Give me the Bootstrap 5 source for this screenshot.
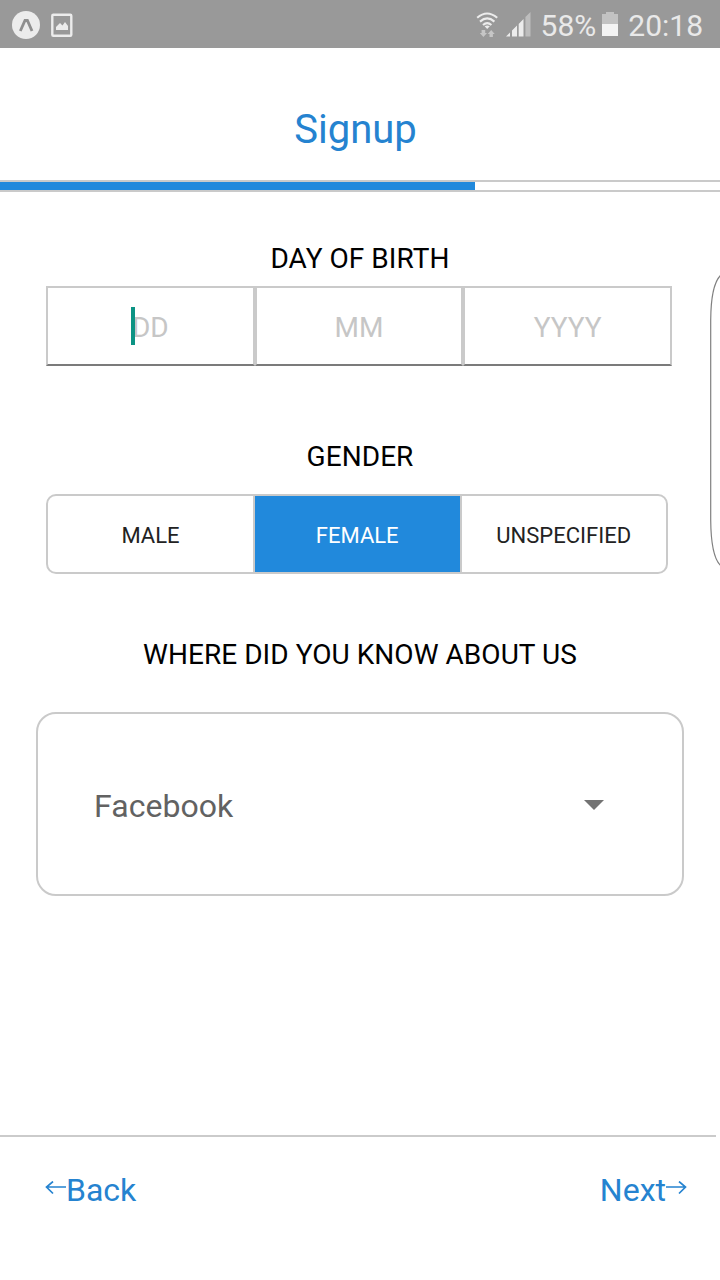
<!DOCTYPE html>
<html lang="en">
<head>
<meta charset="utf-8">
<meta name="viewport" content="width=device-width, initial-scale=1">
<title>Signup</title>
<link href="https://cdn.jsdelivr.net/npm/bootstrap@5.3.0/dist/css/bootstrap.min.css" rel="stylesheet">
<style>
:root { --line: #cacaca; --brand: #2189dc; }
body { font-family: Roboto, "Liberation Sans", sans-serif; background: #fff; color: #000; line-height: 1; }
.screen { width: 720px; height: 1280px; }
.statusbar { height: 48px; background: #999; color: #e9e9e9; font-size: 30px; font-weight: 400; padding: 3px 17px 0 11px; }
.statusbar svg { display: block; flex: none; }
.title { height: 132px; padding: 31px 9px 0 0; font-size: 40px; font-weight: 400; color: #2583d0; }
.steps { height: 12px; border: solid var(--line); border-width: 2px 0; border-radius: 0; background: #fff; }
.steps .progress-bar { background: var(--brand); width: 475px; }
.field-label { height: 32px; line-height: 34px; font-size: 28px; letter-spacing: .05px; }
.birth { margin: 12px 48px 0 46px; height: 80px; }
.birth-part { flex: 1 1 0; border: 2px solid var(--line); border-bottom-color: #7b7b7b; font-size: 28px; font-weight: 400; color: #c6c6c6; padding-top: 3px; }
.caret { left: -1px; top: -7px; width: 4px; height: 38px; background: #0c9384; }
.gender { margin: 22px 52px 0 46px; height: 80px; border: 2px solid var(--line); border-radius: 10px; overflow: hidden; }
.gender .btn { flex: 0 0 205px; border: 0; border-radius: 0; font-size: 22px; line-height: 1; color: #222; padding: 4px 0 0; }
.gender .btn + .btn { flex: 1 1 0; border-left: 2px solid var(--line); }
.gender .btn.active { background: var(--brand); color: #fff; }
.source { margin: 42px 36px 0; height: 184px; border: 2px solid var(--line); border-radius: 20px; padding: 2px 78px 0 56px; font-size: 32px; letter-spacing: .05px; color: #626262; }
.source span { padding-top: 1px; }
.actions { height: 145px; margin-right: 4px; border-top: 2px solid #cbcbcb; padding: 37px 29px 0 45px; }
.actions a { font-size: 32px; color: #2583d0; text-decoration: none; }
.actions svg { margin-bottom: 2px; }
.edge-handle { right: 0; top: 270px; }
</style>
</head>
<body>
<div class="screen position-relative d-flex flex-column overflow-hidden">
  <div class="statusbar d-flex align-items-center justify-content-between">
    <div class="d-flex align-items-center">
      <svg width="64" height="30" viewBox="0 0 64 30">
        <circle cx="15" cy="14" r="14" fill="#ececec"/>
        <path d="M9.300 20 14 9.500h2.400L21 20" fill="none" stroke="#8f8f8f" stroke-width="2.800"/>
        <rect x="41.300" y="3.800" width="19" height="21" rx="1" fill="none" stroke="#ececec" stroke-width="2.400"/>
        <path d="M45 19v-3l4-4 2.500 2.500L54 11l3 4v4z" fill="#ececec"/>
      </svg>
    </div>
    <div class="d-flex align-items-center">
      <svg width="65" height="30" viewBox="0 0 65 30">
        <g fill="none" stroke="#ececec" stroke-width="2.100">
          <path d="M1.200 6.800Q11 -1.800 21.200 6.800"/><path d="M4 10.600q7.200-6.300 14.400 0"/><path d="M7 14q4.200-3.800 8.400 0"/>
        </g>
        <path d="M8.600 15.300q2.600-1.500 5.200 0L11.200 18z" fill="#ececec"/>
        <path d="M5.600 19h3.600v3h1.800l-3.600 4-3.600-4h1.800zM13.500 26h3.400v-3h1.800l-3.500-4-3.500 4h1.800z" fill="#c6c6c6"/>
        <path d="M30 25.500 34 21.500v4zM36 25.500v-6L41 14.500v11zM42.700 25.500V13L47.500 8v17.500z" fill="#ececec"/>
        <path d="M49.400 25.500V6L54.500 1v24.500z" fill="#bdbdbd"/>
      </svg>
      <span>58%</span>
      <svg class="ms-1 me-2" width="20" height="28" viewBox="0 0 20 28">
        <path d="M2 12V2h4V0h8v2h4v10z" fill="#c2c2c2"/><path d="M2 12h16v12H2z" fill="#f3f3f3"/>
      </svg>
      <span>20:18</span>
    </div>
  </div>

  <h1 class="title m-0 d-flex align-items-center justify-content-center">Signup</h1>
  <div class="steps progress"><div class="progress-bar"></div></div>

  <main class="flex-grow-1 text-center">
    <div class="field-label" style="margin-top:50px">DAY OF BIRTH</div>
    <div class="birth d-flex">
      <div class="birth-part d-flex align-items-center justify-content-center"><span class="position-relative">DD<i class="caret position-absolute"></i></span></div>
      <div class="birth-part d-flex align-items-center justify-content-center">MM</div>
      <div class="birth-part d-flex align-items-center justify-content-center">YYYY</div>
    </div>

    <div class="field-label" style="margin-top:74px">GENDER</div>
    <div class="gender d-flex">
      <button type="button" class="btn">MALE</button>
      <button type="button" class="btn active">FEMALE</button>
      <button type="button" class="btn">UNSPECIFIED</button>
    </div>

    <div class="field-label" style="margin-top:64px">WHERE DID YOU KNOW ABOUT US</div>
    <div class="source d-flex align-items-center justify-content-between">
      <span>Facebook</span>
      <svg width="20" height="10" viewBox="0 0 20 10"><path d="M0 0h20L10 10z" fill="#737373"/></svg>
    </div>
  </main>

  <nav class="actions d-flex align-items-start justify-content-between">
    <a href="#" class="d-flex align-items-center">
      <svg width="21" height="16" viewBox="0 0 21 16" fill="none" stroke="currentColor" stroke-width="1.700"><path d="M21 6H1.500M8 .5 1.500 6 8 12.500"/></svg><span>Back</span>
    </a>
    <a href="#" class="d-flex align-items-center">
      <span>Next</span><svg width="21" height="16" viewBox="0 0 21 16" fill="none" stroke="currentColor" stroke-width="1.700"><path d="M0 6h19.500M13 .5 19.500 6 13 12.500"/></svg>
    </a>
  </nav>

  <svg class="edge-handle position-absolute" width="10" height="300" viewBox="0 0 10 300" fill="none" stroke="#808080" stroke-width="1.200"><path d="M11 5Q1 14 .7 50V250Q1 287 11 296"/></svg>
</div>
<script src="https://cdn.jsdelivr.net/npm/bootstrap@5.3.0/dist/js/bootstrap.bundle.min.js"></script>
</body>
</html>
